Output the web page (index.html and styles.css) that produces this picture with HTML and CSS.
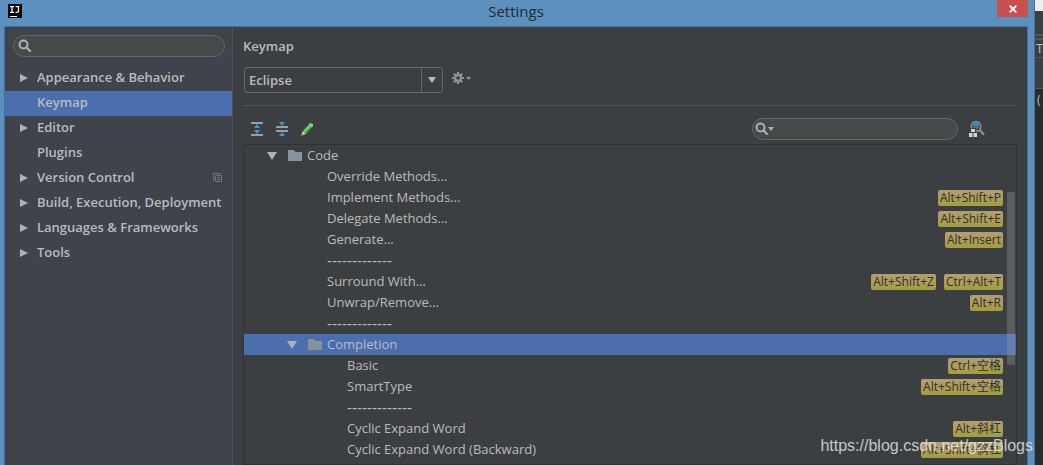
FILE: index.html
```html
<!DOCTYPE html>
<html lang="en">
<head>
<meta charset="utf-8">
<title>Settings</title>
<link rel="stylesheet" href="styles.css">
</head>
<body>
<div class="desktop">
  <div class="window">
    <header class="titlebar">
      <svg class="app-logo" viewBox="0 0 14 14" aria-hidden="true"><path fill="#000" d="M0 0h14v14H0z"/><path fill="none" stroke="#fff" stroke-width="1.3" d="M2 2.6h4M4 2.6v5.8M2 8.4h4M7.5 2.6h3v4.2q0 1.6-1.6 1.6H7.4"/><path fill="#fff" d="M2 12h7v1H2z"/></svg>
      <h1 class="title">Settings</h1>
      <button class="close" aria-label="Close"><svg viewBox="0 0 8 8" width="8" height="8"><path d="M.7.7l6.6 6.6M7.3.7L.7 7.3" stroke="#fff" stroke-width="1.9"/></svg></button>
    </header>
    <div class="content">
      <nav class="sidebar">
        <label class="search">
          <svg width="14" height="14" viewBox="0 0 14 14" aria-hidden="true"><circle cx="5.5" cy="5.5" r="4" fill="none" stroke="#afb1b3" stroke-width="2"/><path d="M8.5 8.5l4.3 4.2" stroke="#afb1b3" stroke-width="2.2"/></svg>
          <input type="text" aria-label="Search settings">
        </label>
        <ul class="categories">
          <li class="category"><svg class="arrow" viewBox="0 0 8 8"><path d="M0 0l8 4-8 4z"/></svg><a href="#">Appearance &amp; Behavior</a></li>
          <li class="category selected"><span class="arrow"></span><a href="#">Keymap</a></li>
          <li class="category"><svg class="arrow" viewBox="0 0 8 8"><path d="M0 0l8 4-8 4z"/></svg><a href="#">Editor</a></li>
          <li class="category"><span class="arrow"></span><a href="#">Plugins</a></li>
          <li class="category"><svg class="arrow" viewBox="0 0 8 8"><path d="M0 0l8 4-8 4z"/></svg><a href="#">Version Control</a><svg class="project-mark" viewBox="0 0 9 9" fill="none" stroke="#70757a"><path d="M2.5 6.5h-2v-6h6v2M2.5 2.5h6v6h-6zM4 4.5h3M4 6.5h3"/></svg></li>
          <li class="category"><svg class="arrow" viewBox="0 0 8 8"><path d="M0 0l8 4-8 4z"/></svg><a href="#">Build, Execution, Deployment</a></li>
          <li class="category"><svg class="arrow" viewBox="0 0 8 8"><path d="M0 0l8 4-8 4z"/></svg><a href="#">Languages &amp; Frameworks</a></li>
          <li class="category"><svg class="arrow" viewBox="0 0 8 8"><path d="M0 0l8 4-8 4z"/></svg><a href="#">Tools</a></li>
        </ul>
      </nav>
      <main class="panel">
        <h2 class="heading">Keymap</h2>
        <div class="scheme">
          <div class="dropdown">
            <select aria-label="Keymap scheme"><option>Eclipse</option></select>
            <span class="dropdown-arrow"><svg width="8" height="6" viewBox="0 0 8 6"><path fill="#bbb" d="M0 0h8L4 6z"/></svg></span>
          </div>
          <button class="icon-button gear" aria-label="Scheme actions"><svg width="19" height="12" viewBox="0 0 19 12"><g fill="none" stroke="#8f9192"><circle cx="6" cy="6" r="3" stroke-width="2.4"/><path stroke-width="2.2" d="M6 0v2.5M6 9.500v2.500M0 6h2.500M9.500 6H12M1.800 1.800l1.700 1.700M8.500 8.500l1.700 1.700M1.800 10.200l1.700-1.700M8.500 3.500l1.700-1.700"/></g><path fill="#8f9192" d="M14 5h5l-2.500 3z"/></svg></button>
        </div>
        <div class="toolbar">
          <button class="icon-button" aria-label="Expand all"><svg width="12" height="14" viewBox="0 0 12 14"><path stroke="#9b9d9e" stroke-width="2" d="M0 1h12M0 13h12"/><path fill="#4195c8" d="M3 6l3-4 3 4zM3 8l3 4 3-4z"/></svg></button>
          <button class="icon-button" aria-label="Collapse all"><svg width="12" height="14" viewBox="0 0 12 14"><path stroke="#9b9d9e" stroke-width="2" d="M0 5h12M0 9h12"/><path fill="#4195c8" d="M3 0l3 4 3-4zM3 14l3-4 3 4z"/></svg></button>
          <button class="icon-button" aria-label="Edit shortcut"><svg width="12" height="13" viewBox="0 0 12 13"><path fill="#f0c48a" d="M0 13l1.800-5 3.300 2.700z"/><path fill="#555" d="M0 13l.7-2 1.300 1z"/><path fill="#35b54a" d="M1.800 8L7.800 1.500l3.200 2.800-5.900 6.400z"/><path fill="#8bdc88" d="M2.700 8.200L8.200 2.300l1 .9-5.500 5.900z"/><path fill="#d8dcd8" d="M7.800 1.500Q9 .1 10 .3q1.700.5 2 1.800 0 1.100-1 2.200z"/><path fill="#55bd5b" d="M8.800 1.300q1-.6 2 .2.700.8.100 1.700z"/></svg></button>
          <label class="search filter">
            <svg width="20" height="14" viewBox="0 0 20 14" aria-hidden="true"><circle cx="5.500" cy="5.500" r="4" fill="none" stroke="#afb1b3" stroke-width="2"/><path d="M8.500 8.500l4 4" stroke="#afb1b3" stroke-width="2.200"/><path fill="#afb1b3" d="M13 5h6l-3 4z"/></svg>
            <input type="text" aria-label="Search actions">
          </label>
          <button class="icon-button" aria-label="Find by shortcut"><svg width="16" height="16" viewBox="0 0 16 16"><path d="M10.500 9l4.500 4.700" stroke="#8b8d8e" stroke-width="2.500"/><circle cx="7" cy="5.500" r="4.700" fill="#303437" stroke="#8b8d8e" stroke-width="1.700"/><circle cx="7" cy="5" r="3.200" fill="#3278a0"/><path fill="#4ba1c8" d="M4.500 4q2.500-3 5 0z"/><path fill="#3c3f41" d="M1 7h6v4H1z"/><path fill="#d2d2d2" d="M2 8h4v3H2zM0 12h3.500v4H0zM4.500 12H8v4H4.500z"/></svg></button>
        </div>
        <div class="tree-box">
          <ul class="tree">
            <li class="row"><svg class="toggle" viewBox="0 0 10 8"><path d="M0 0h10L5 8z"/></svg><svg class="folder" viewBox="0 0 14 11"><path d="M0 0h5.500l2 2H14v9H0z"/></svg><span>Code</span></li>
            <li class="row level-2"><span>Override Methods...</span></li>
            <li class="row level-2"><span>Implement Methods...</span><span class="keys"><kbd>Alt+Shift+P</kbd></span></li>
            <li class="row level-2"><span>Delegate Methods...</span><span class="keys"><kbd>Alt+Shift+E</kbd></span></li>
            <li class="row level-2"><span>Generate...</span><span class="keys"><kbd>Alt+Insert</kbd></span></li>
            <li class="row level-2"><span class="divider">-------------</span></li>
            <li class="row level-2"><span>Surround With...</span><span class="keys"><kbd>Alt+Shift+Z</kbd><kbd>Ctrl+Alt+T</kbd></span></li>
            <li class="row level-2"><span>Unwrap/Remove...</span><span class="keys"><kbd>Alt+R</kbd></span></li>
            <li class="row level-2"><span class="divider">-------------</span></li>
            <li class="row group selected"><svg class="toggle" viewBox="0 0 10 8"><path d="M0 0h10L5 8z"/></svg><svg class="folder" viewBox="0 0 14 11"><path d="M0 0h5.500l2 2H14v9H0z"/></svg><span>Completion</span></li>
            <li class="row level-3"><span>Basic</span><span class="keys"><kbd>Ctrl+空格</kbd></span></li>
            <li class="row level-3"><span>SmartType</span><span class="keys"><kbd>Alt+Shift+空格</kbd></span></li>
            <li class="row level-3"><span class="divider">-------------</span></li>
            <li class="row level-3"><span>Cyclic Expand Word</span><span class="keys"><kbd>Alt+斜杠</kbd></span></li>
            <li class="row level-3"><span>Cyclic Expand Word (Backward)</span><span class="keys"><kbd>Alt+Shift+斜杠</kbd></span></li>
          </ul>
          <div class="scroll-thumb"></div>
        </div>
      </main>
    </div>
  </div>
  <aside class="behind">
    <div class="behind-title"></div>
    <div class="behind-menu"></div>
    <div class="behind-tool">T</div>
    <div class="behind-tabs"></div>
    <div class="behind-code">(</div>
  </aside>
  <div class="watermark">https://blog.csdn.net/gzzBlogs</div>
</div>
</body>
</html>
```
FILE: styles.css
```css
* {
  box-sizing: border-box;
}

body {
  margin: 0;
  background: #2b2b2b;
  color: #bbb;
  font: 13px/21px "Open Sans", "Noto Sans CJK SC", sans-serif;
}

ul {
  list-style: none;
  margin: 0;
  padding: 0;
}

button {
  border: 0;
  padding: 0;
  background: none;
}

svg {
  display: block;
  flex: none;
}

.desktop {
  position: relative;
  display: flex;
  height: 100vh;
  overflow: hidden;
}

.window {
  flex: 1;
  min-width: 0;
  display: flex;
  flex-direction: column;
  background: #5b90bf;
  border-right: 1px solid #456f9b;
  padding: 0 6px 0 4px;
}

.titlebar {
  display: grid;
  grid-template-columns: 1fr auto 1fr;
  align-items: start;
  height: 26px;
  flex: none;
}

.app-logo {
  width: 14px;
  height: 14px;
  margin: 4px;
}

.title {
  margin: 0;
  color: #222a33;
  font-size: 15px;
  font-weight: 400;
  line-height: 23px;
}

.close {
  justify-self: end;
  display: grid;
  place-items: center;
  width: 31px;
  height: 17px;
  background: #c75050;
}

.content {
  flex: 1;
  min-height: 0;
  display: flex;
  border: 1px solid #41709c;
  border-bottom: 0;
  background: #3c3f41;
}

.sidebar {
  flex: none;
  width: 228px;
  padding-top: 8px;
  background: #3e434c;
  border-right: 1px solid #4e5052;
}

.search {
  display: flex;
  align-items: center;
  gap: 4px;
  height: 22px;
  margin: 0 7px 0 8px;
  padding: 0 4px;
  border: 1px solid #646667;
  border-radius: 11px;
  background: #45494a;
}

.search input {
  flex: 1;
  min-width: 0;
  border: 0;
  outline: 0;
  background: none;
  color: #bbb;
  font: inherit;
}

.categories {
  padding-top: 9px;
}

.category {
  display: flex;
  align-items: center;
  height: 25px;
  padding: 0 10px 2px 15px;
  font-weight: 600;
  white-space: nowrap;
}

.category a {
  color: inherit;
  text-decoration: none;
}

.arrow {
  width: 8px;
  height: 8px;
  margin-right: 9px;
  fill: #afb1b3;
}

.project-mark {
  width: 9px;
  height: 9px;
  margin-left: auto;
}

.selected {
  background: #4b6eaf;
}

.panel {
  flex: 1;
  min-width: 0;
  display: flex;
  flex-direction: column;
  padding: 9px 10px 0;
}

.heading {
  margin: 0;
  font-size: 13px;
  font-weight: 600;
  line-height: 21px;
}

.scheme {
  display: flex;
  align-items: center;
  gap: 9px;
  padding: 10px 0 12px 1px;
  border-bottom: 1px solid #515355;
}

.gear {
  padding-bottom: 4px;
}

.dropdown {
  display: flex;
  width: 199px;
  height: 26px;
  border: 1px solid #646667;
  border-radius: 3px;
}

.dropdown select {
  flex: 1;
  appearance: none;
  border: 0;
  padding: 0 4px;
  background: none;
  color: #bbb;
  font: inherit;
  font-weight: 600;
}

.dropdown-arrow {
  display: grid;
  place-items: center;
  width: 21px;
  border-left: 1px solid #646667;
}

.toolbar {
  display: flex;
  align-items: center;
  gap: 13px;
  padding: 12px 32px 4px 8px;
}

.filter {
  width: 206px;
  margin: 0 -2px 0 auto;
  padding: 0 2px;
}

.tree-box {
  position: relative;
  flex: 1;
  min-height: 0;
  overflow: hidden;
  border: 1px solid #323232;
}

.row {
  display: flex;
  align-items: center;
  height: 21px;
  padding: 0 13px 0 23px;
  white-space: nowrap;
}

.toggle {
  width: 10px;
  height: 8px;
  margin-right: 11px;
  fill: #afb1b3;
}

.folder {
  width: 14px;
  height: 11px;
  margin-right: 5px;
  fill: #87939a;
}

.group {
  padding-left: 43px;
}

.level-2 {
  padding-left: 83px;
}

.level-3 {
  padding-left: 103px;
}

.divider {
  font-family: "Liberation Sans", sans-serif;
  font-size: 15px;
}

.keys {
  display: flex;
  gap: 8px;
  margin-left: auto;
}

kbd {
  padding: 0 2px;
  border-radius: 2px;
  background: linear-gradient(#b39e73, #a39e3c);
  color: #2f3030;
  font: inherit;
  font-size: 12px;
  line-height: 16px;
}

.scroll-thumb {
  position: absolute;
  top: 47px;
  right: 1px;
  width: 8px;
  height: 173px;
  background: rgba(166, 166, 166, 0.3);
}

.behind {
  flex: none;
  display: flex;
  flex-direction: column;
  width: 8px;
  overflow: hidden;
  background: #2b2b2b;
}

.behind-title {
  height: 11px;
  background: #eee;
}

.behind-menu {
  height: 29px;
  background: #3c3f41;
  border-bottom: 6px double #555;
}

.behind-tool {
  height: 18px;
  background: #3c3f41;
  border-bottom: 1px solid #555;
  line-height: 17px;
  padding-left: 1px;
}

.behind-tabs {
  height: 31px;
  background: #3c3f41;
  border-bottom: 1px solid #555;
}

.behind-code {
  padding-left: 2px;
  font-size: 12px;
}

.watermark {
  position: absolute;
  right: 10px;
  bottom: 9px;
  color: rgba(235, 235, 235, 0.8);
  font: 16px/20px "Liberation Sans", sans-serif;
}
```
